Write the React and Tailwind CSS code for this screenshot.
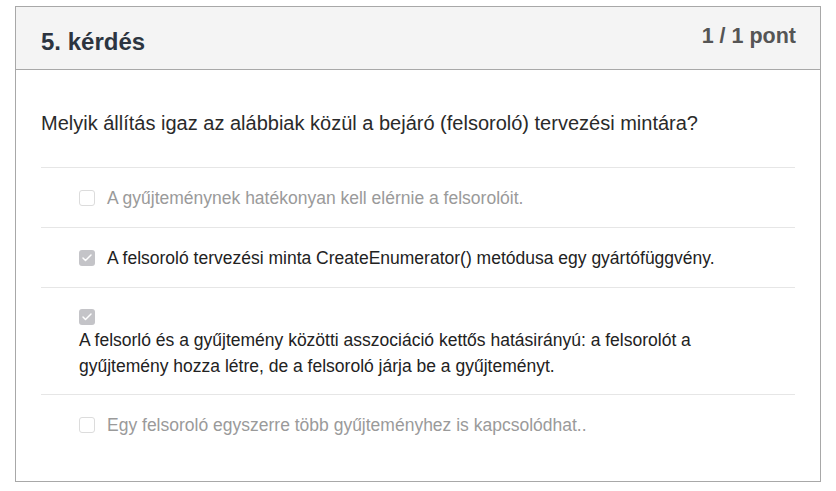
import { Check } from 'lucide-react';

const options = [
  { text: 'A gyűjteménynek hatékonyan kell elérnie a felsorolóit.', checked: false },
  { text: 'A felsoroló tervezési minta CreateEnumerator() metódusa egy gyártófüggvény.', checked: true },
  {
    text: 'A felsorló és a gyűjtemény közötti asszociáció kettős hatásirányú: a felsorolót a gyűjtemény hozza létre, de a felsoroló járja be a gyűjteményt.',
    checked: true,
    block: true,
  },
  { text: 'Egy felsoroló egyszerre több gyűjteményhez is kapcsolódhat..', checked: false },
];

function Box({ checked }) {
  return checked ? (
    <span className="inline-flex h-4 w-4 shrink-0 items-center justify-center rounded-[3px] bg-[#c4c4c8]">
      <Check size={12} strokeWidth={3} className="text-white" />
    </span>
  ) : (
    <span className="inline-block h-4 w-4 shrink-0 rounded-[3px] border border-[#dcdcdc] bg-white" />
  );
}

export default function App() {
  return (
    <div className="min-h-screen bg-white pl-[15px] pr-[15px] pt-[6px] font-['Liberation_Sans',Arial,sans-serif]">
      <div className="h-[476px] w-[806px] border border-[#a8a8a8] bg-white">
        <div className="flex h-[63px] items-start justify-between border-b border-[#a8a8a8] bg-[#f4f4f4] pl-[25px] pr-[24px]">
          <h2 className="pt-[21px] text-[24px] font-bold leading-7 text-[#2c3440]">5. kérdés</h2>
          <div className="pt-[17px] text-[21.5px] font-bold leading-6 text-[#555]">1 / 1 pont</div>
        </div>
        <div className="px-[25px]">
          <p className="pt-[41px] pb-[32px] text-[20px] leading-6 text-[#2a2a2a]">
            Melyik állítás igaz az alábbiak közül a bejáró (felsoroló) tervezési mintára?
          </p>
          <div className="border-t border-[#e6e6e6]">
            {options.map((o, i) => (
              <div
                key={i}
                className={`pl-[38px] pr-4 text-[17.5px] leading-[26px] ${i < options.length - 1 ? 'border-b border-[#e6e6e6]' : ''} ${o.checked ? 'text-[#222]' : 'text-[#9a9a9a]'}`}
              >
                {o.block ? (
                  <div className="pt-[21px] pb-[15px]">
                    <div className="flex h-4 items-center"><Box checked /></div>
                    <div className="mt-[2px]">{o.text}</div>
                  </div>
                ) : (
                  <div className="flex h-[59px] items-center gap-[12px]">
                    <Box checked={o.checked} />
                    <span>{o.text}</span>
                  </div>
                )}
              </div>
            ))}
          </div>
        </div>
      </div>
    </div>
  );
}
